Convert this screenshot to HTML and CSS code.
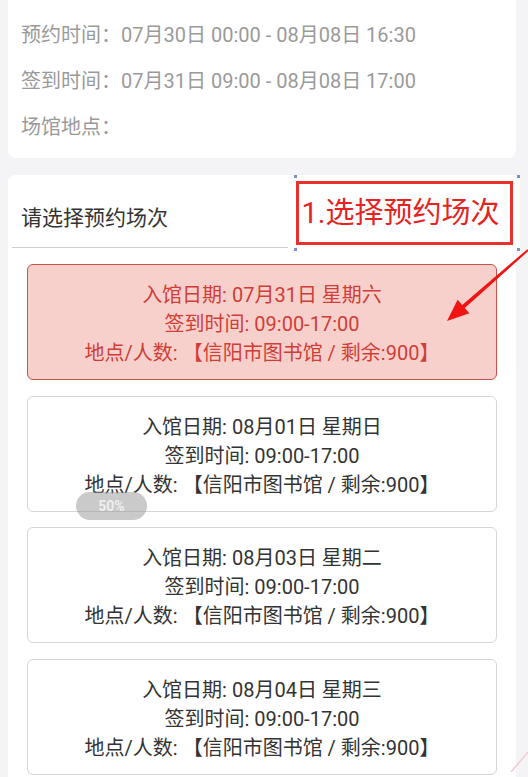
FILE: index.html
```html
<!DOCTYPE html>
<html lang="zh-CN">
<head>
    <meta charset="UTF-8">
    <meta name="viewport" content="width=device-width, initial-scale=1.0">
    <title>预约场次</title>
    <link rel="stylesheet" href="styles.css">
</head>
<body>

<div class="page">
    <div class="info-card">
        <p class="info-row">预约时间：07月30日 00:00 - 08月08日 16:30</p>
        <p class="info-row">签到时间：07月31日 09:00 - 08月08日 17:00</p>
        <p class="info-row">场馆地点：</p>
    </div>

    <div class="session-card">
        <div class="session-title">请选择预约场次</div>

        <div class="note">
            <span class="handle tl"></span>
            <span class="handle tr"></span>
            <span class="handle bl"></span>
            <span class="handle br"></span>
            <div class="note-box">1.选择预约场次</div>
        </div>

        <div class="session-list">
            <div class="session active">
                <p>入馆日期: 07月31日 星期六</p>
                <p>签到时间: 09:00-17:00</p>
                <p>地点/人数: 【信阳市图书馆 / 剩余:900】</p>
            </div>
            <div class="session">
                <p>入馆日期: 08月01日 星期日</p>
                <p>签到时间: 09:00-17:00</p>
                <p>地点/人数: 【信阳市图书馆 / 剩余:900】</p>
            </div>
            <div class="session">
                <p>入馆日期: 08月03日 星期二</p>
                <p>签到时间: 09:00-17:00</p>
                <p>地点/人数: 【信阳市图书馆 / 剩余:900】</p>
            </div>
            <div class="session">
                <p>入馆日期: 08月04日 星期三</p>
                <p>签到时间: 09:00-17:00</p>
                <p>地点/人数: 【信阳市图书馆 / 剩余:900】</p>
            </div>
        </div>
    </div>

    <div class="zoom-pill">50%</div>

    <!-- 标注箭头 -->
    <svg class="marks" width="528" height="777" viewBox="0 0 528 777">
        <polygon fill="#f01414" points="527.4,249.2 462.2,305 457.6,299.8 447,321 469.4,313.3 464.8,308 528.6,250.8"/>
        <line x1="511" y1="772" x2="528" y2="752" stroke="#f3cdd6" stroke-width="1.5"/>
    </svg>
</div>

</body>
</html>
```

FILE: styles.css
```css
body {
    margin: 0;
    padding: 0;
    background-color: #f4f4f6;
    font-family: Roboto, "Noto Sans CJK SC", sans-serif;
}
p {
    margin: 0;
}
.page {
    position: relative;
    width: 528px;
    height: 777px;
    overflow: hidden;
    padding: 0 12px 0 8px;
    box-sizing: border-box;
}
.info-card {
    margin-top: -12px;
    background: white;
    border-radius: 8px;
    padding: 24px 13px 8px;
}
.info-row {
    font-size: 20px;
    line-height: 46px;
    color: #9a9a9a;
}
.session-card {
    position: relative;
    margin-top: 17px;
    background: white;
    border-radius: 8px 8px 0 0;
    padding-bottom: 40px;
}
.session-title {
    margin: 0 4px;
    padding: 28px 0 14px 9px;
    font-size: 21px;
    line-height: 30px;
    color: #333;
    border-bottom: 1px solid #cfcfcf;
}
.session-list {
    padding: 16px 19px 0;
    display: flex;
    flex-direction: column;
    gap: 15.5px;
}
.session {
    border: 1px solid #d6d6d6;
    border-radius: 6px;
    padding: 16px 0 11px;
    text-align: center;
    font-size: 20px;
    line-height: 29px;
    color: #333;
}
.session.active {
    background: #f7d0cc;
    border-color: #c9514b;
    color: #d13d37;
}
.note {
    position: absolute;
    left: 280px;
    top: 0;
    width: 232px;
    height: 76px;
    background: white;
    display: flex;
    align-items: center;
    justify-content: center;
}
.note-box {
    width: 217px;
    height: 64px;
    box-sizing: border-box;
    border: 3px solid #e8302f;
    color: #e42323;
    font-size: 29px;
    line-height: 58px;
    padding-left: 3px;
    white-space: nowrap;
}
.handle {
    position: absolute;
    width: 3px;
    height: 3px;
    background: #7b8fc9;
}
.handle.tl { left: 6px; top: 0; }
.handle.tr { right: 0; top: 0; }
.handle.bl { left: 6px; bottom: 0; }
.handle.br { right: 0; bottom: 0; }
.zoom-pill {
    position: absolute;
    left: 76px;
    top: 492px;
    width: 71px;
    height: 28px;
    border-radius: 14px;
    background: rgba(150, 150, 150, 0.5);
    color: #eeeeee;
    font-size: 14px;
    font-weight: bold;
    line-height: 28px;
    text-align: center;
}
.marks {
    position: absolute;
    left: 0;
    top: 0;
    pointer-events: none;
}
```
